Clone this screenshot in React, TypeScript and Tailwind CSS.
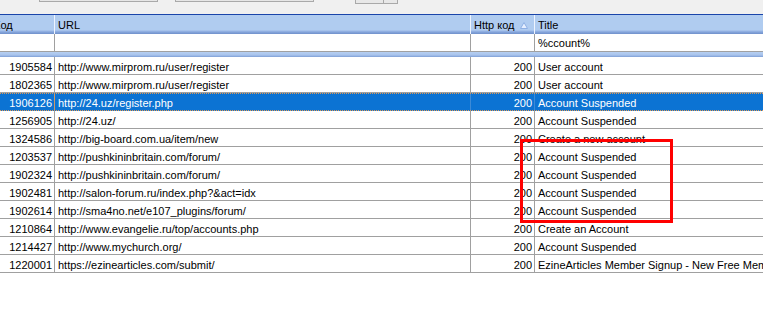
import React from "react";

type Row = { id: string; url: string; code: string; title: string; sel?: boolean };

const rows: Row[] = [
  { id: "1905584", url: "http://www.mirprom.ru/user/register", code: "200", title: "User account" },
  { id: "1802365", url: "http://www.mirprom.ru/user/register", code: "200", title: "User account" },
  { id: "1906126", url: "http://24.uz/register.php", code: "200", title: "Account Suspended", sel: true },
  { id: "1256905", url: "http://24.uz/", code: "200", title: "Account Suspended" },
  { id: "1324586", url: "http://big-board.com.ua/item/new", code: "200", title: "Create a new account" },
  { id: "1203537", url: "http://pushkininbritain.com/forum/", code: "200", title: "Account Suspended" },
  { id: "1902324", url: "http://pushkininbritain.com/forum/", code: "200", title: "Account Suspended" },
  { id: "1902481", url: "http://salon-forum.ru/index.php?&act=idx", code: "200", title: "Account Suspended" },
  { id: "1902614", url: "http://sma4no.net/e107_plugins/forum/", code: "200", title: "Account Suspended" },
  { id: "1210864", url: "http://www.evangelie.ru/top/accounts.php", code: "200", title: "Create an Account" },
  { id: "1214427", url: "http://www.mychurch.org/", code: "200", title: "Account Suspended" },
  { id: "1220001", url: "https://ezinearticles.com/submit/", code: "200", title: "EzineArticles Member Signup - New Free Member Registration" },
];

export default function App() {
  return (
    <div
      className="relative w-[763px] h-[313px] overflow-hidden bg-white text-[11px] text-black"
      style={{ fontFamily: '"Liberation Sans", Arial, sans-serif' }}
    >
      {/* toolbar */}
      <div className="h-[14px] bg-[#f0f0f0] flex items-start">
        <div className="ml-[39px] w-[119px] h-[2px] border-b border-x border-[#a9a9a9] bg-[#e6e6e6]" />
        <div className="ml-[17px] w-[139px] h-[2px] border-b border-x border-[#a9a9a9] bg-[#e6e6e6]" />
        <div className="ml-[41px] w-[43px] h-[4px] flex border-b border-x border-[#a9a9a9] bg-[#e8e8e8]">
          <div className="w-[28px] border-r border-[#a9a9a9]" />
        </div>
      </div>
      <div className="h-[1px] bg-[#1a45aa]" />

      {/* header */}
      <div className="h-[19px] flex bg-[linear-gradient(to_bottom,#b0ccf0_0px,#b0ccf0_15px,#9ab7e6_16px,#86a6dc_17px,#6f90cb_19px)] leading-[21px]">
        <div className="w-[55px] shrink-0 border-r border-[#eef4ff] overflow-hidden whitespace-nowrap">
          <span className="ml-[-6px]">Код</span>
        </div>
        <div className="w-[416px] shrink-0 border-r border-[#eef4ff] pl-[3px]">URL</div>
        <div className="w-[64px] shrink-0 border-r border-[#eef4ff] pl-[3px] flex items-start">
          <span>Http код</span>
          <svg className="ml-[6px] mt-[7px]" width="8" height="7" viewBox="0 0 8 7">
            <path d="M4 0.5 L7.5 6.5 L0.5 6.5 Z" fill="#e6efff" stroke="#8fb0e4" strokeWidth="1" />
          </svg>
        </div>
        <div className="flex-1 pl-[3px]">Title</div>
      </div>

      {/* filter row */}
      <div className="h-[18px] flex border-b border-[#a0a0a0] leading-[19px]">
        <div className="w-[55px] shrink-0 border-r border-[#a0a0a0]" />
        <div className="w-[416px] shrink-0 border-r border-[#a0a0a0]" />
        <div className="w-[64px] shrink-0 border-r border-[#a0a0a0]" />
        <div className="flex-1 pl-[3px]">%ccount%</div>
      </div>
      <div className="h-[5px] bg-[linear-gradient(to_bottom,#b6cff1,#a8c3ec_60%,#7e9fd6)]" />

      {/* rows */}
      {rows.map((r) => (
        <div
          key={r.id}
          className={
            r.sel
              ? "h-[18px] flex bg-[#0c73d3] text-white leading-[19px] border-y border-dotted border-[#e09a55]"
              : "h-[18px] flex border-b border-[#a0a0a0] leading-[20px]"
          }
        >
          <div className={"w-[55px] shrink-0 border-r text-right pr-[2px] " + (r.sel ? "border-[#c99a6a]" : "border-[#a0a0a0]")}>
            {r.id}
          </div>
          <div className={"w-[416px] shrink-0 border-r pl-[3px] whitespace-nowrap overflow-hidden " + (r.sel ? "border-[#3d8ad6]" : "border-[#a0a0a0]")}>
            {r.url}
          </div>
          <div className={"w-[64px] shrink-0 border-r text-right pr-[2px] " + (r.sel ? "border-[#3d8ad6]" : "border-[#a0a0a0]")}>
            {r.code}
          </div>
          <div className="flex-1 pl-[3px] whitespace-nowrap overflow-hidden">{r.title}</div>
        </div>
      ))}

      {/* red highlight */}
      <div className="absolute left-[520px] top-[139px] w-[153px] h-[84px] border-[3px] border-[#ff0000]" />
    </div>
  );
}
